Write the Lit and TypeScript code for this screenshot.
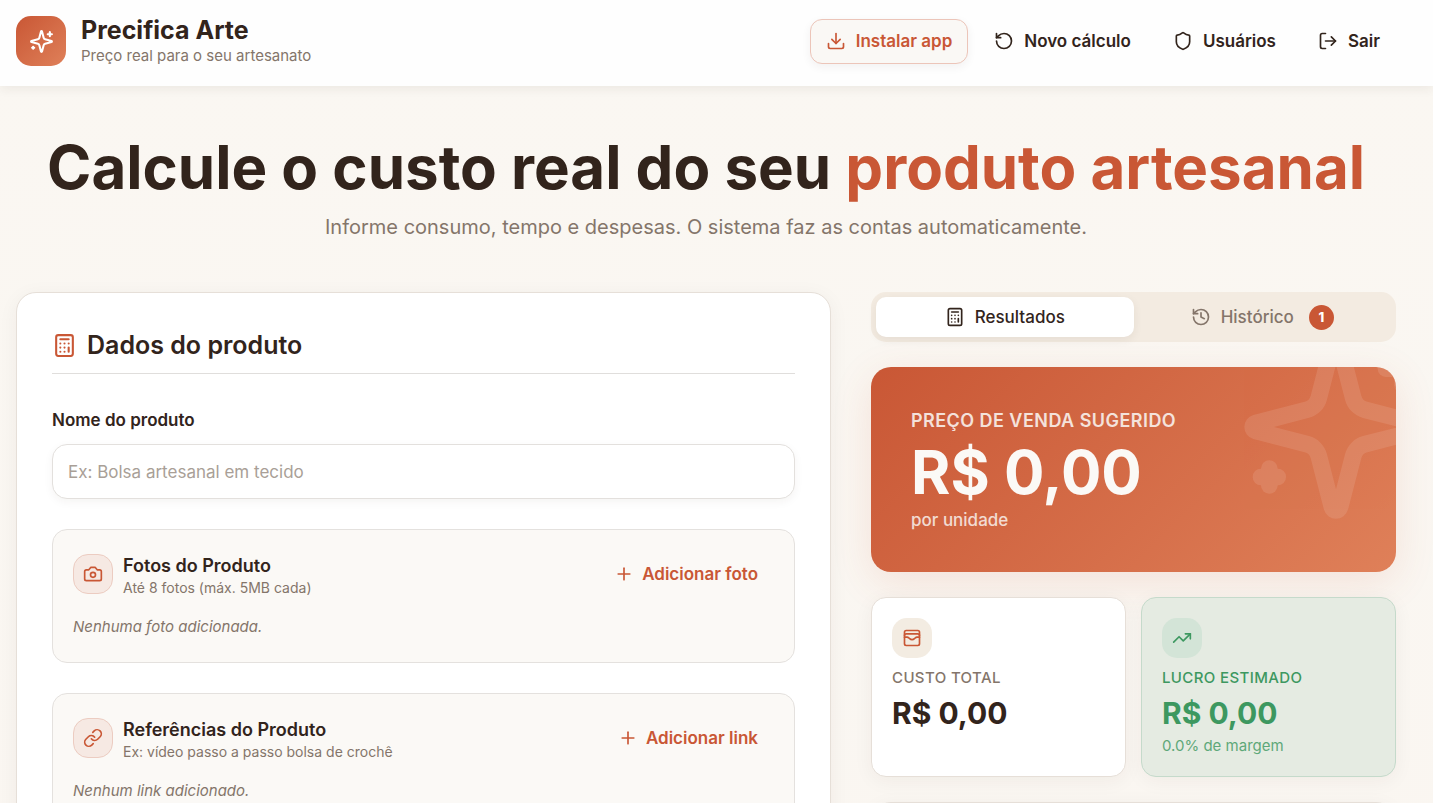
import { LitElement, html, css, svg } from "lit";
import { customElement, property, state } from "lit/decorators.js";
import { classMap } from "lit/directives/class-map.js";

const icons: Record<string, unknown> = {
  sparkles: svg`<path d="M9.937 15.5A2 2 0 0 0 8.5 14.063l-6.135-1.582a.5.5 0 0 1 0-.962L8.5 9.936A2 2 0 0 0 9.937 8.5l1.582-6.135a.5.5 0 0 1 .963 0L14.063 8.5A2 2 0 0 0 15.5 9.937l6.135 1.581a.5.5 0 0 1 0 .964L15.5 14.063a2 2 0 0 0-1.437 1.437l-1.582 6.135a.5.5 0 0 1-.963 0z"/><path d="M20 3v4"/><path d="M22 5h-4"/><path d="M4 17v2"/><path d="M5 18H3"/>`,
  download: svg`<path d="M21 15v4a2 2 0 0 1-2 2H5a2 2 0 0 1-2-2v-4"/><path d="m7 10 5 5 5-5"/><path d="M12 15V3"/>`,
  reset: svg`<path d="M3 12a9 9 0 1 0 9-9 9.75 9.75 0 0 0-6.74 2.74L3 8"/><path d="M3 3v5h5"/>`,
  shield: svg`<path d="M20 13c0 5-3.5 7.5-7.66 8.95a1 1 0 0 1-.67-.01C7.5 20.5 4 18 4 13V6a1 1 0 0 1 1-1c2 0 4.5-1.2 6.24-2.72a1.17 1.17 0 0 1 1.52 0C14.51 3.81 17 5 19 5a1 1 0 0 1 1 1z"/>`,
  logout: svg`<path d="M9 21H5a2 2 0 0 1-2-2V5a2 2 0 0 1 2-2h4"/><path d="m16 17 5-5-5-5"/><path d="M21 12H9"/>`,
  calculator: svg`<rect width="16" height="20" x="4" y="2" rx="2"/><path d="M8 6h8"/><path d="M16 14v4"/><path d="M16 10h.01"/><path d="M12 10h.01"/><path d="M8 10h.01"/><path d="M12 14h.01"/><path d="M8 14h.01"/><path d="M12 18h.01"/><path d="M8 18h.01"/>`,
  history: svg`<path d="M3 12a9 9 0 1 0 9-9 9.75 9.75 0 0 0-6.74 2.74L3 8"/><path d="M3 3v5h5"/><path d="M12 7v5l4 2"/>`,
  camera: svg`<path d="M14.5 4h-5L7 7H4a2 2 0 0 0-2 2v9a2 2 0 0 0 2 2h16a2 2 0 0 0 2-2V9a2 2 0 0 0-2-2h-3l-2.5-3z"/><circle cx="12" cy="13" r="3"/>`,
  link: svg`<path d="M10 13a5 5 0 0 0 7.54.54l3-3a5 5 0 0 0-7.07-7.07l-1.72 1.71"/><path d="M14 11a5 5 0 0 0-7.54-.54l-3 3a5 5 0 0 0 7.07 7.07l1.71-1.71"/>`,
  plus: svg`<path d="M5 12h14"/><path d="M12 5v14"/>`,
  wallet: svg`<rect width="18" height="18" x="3" y="3" rx="2"/><path d="M3 9a2 2 0 0 1 2-2h14a2 2 0 0 1 2 2"/><path d="M3 11h3c.8 0 1.6.3 2.1.9l1.1.9c1.6 1.6 4.1 1.6 5.7 0l1.1-.9c.5-.5 1.3-.9 2.1-.9H21"/>`,
  trend: svg`<path d="m22 7-8.5 8.5-5-5L2 17"/><path d="M16 7h6v6"/>`,
};

@customElement("ui-icon")
class UiIcon extends LitElement {
  @property() name = "";

  static styles = css`
    :host {
      display: block;
      flex: none;
      width: 20px;
      height: 20px;
    }
    .glyph {
      display: block;
      width: 100%;
      height: 100%;
      fill: none;
      stroke: currentColor;
      stroke-width: 2;
      stroke-linecap: round;
      stroke-linejoin: round;
    }
  `;

  render() {
    return html`<svg class="glyph" viewBox="0 0 24 24" aria-hidden="true">${icons[this.name]}</svg>`;
  }
}

@customElement("app-root")
class AppRoot extends LitElement {
  @state() private tab = "resultados";

  static styles = css`
    :host {
      display: block;
      min-height: 100vh;
      background: linear-gradient(#faf7f2, #faf6f1);
      color: #32241c;
      font-family: Inter, "Liberation Sans", sans-serif;
      font-size: 17px;
      line-height: 25px;
    }
    * {
      box-sizing: border-box;
    }
    h1,
    h2,
    h3,
    p {
      margin: 0;
    }
    button,
    input {
      font: inherit;
      color: inherit;
    }
    button {
      cursor: pointer;
    }

    .topbar {
      position: sticky;
      top: 0;
      z-index: 5;
      display: flex;
      align-items: center;
      justify-content: space-between;
      padding: 15px 37px 19px 16px;
      background: #fefefe;
      box-shadow: 0 3px 10px rgba(50, 36, 28, 0.07);
    }
    .brand {
      display: flex;
      align-items: center;
      gap: 15px;
    }
    .logo {
      display: grid;
      place-items: center;
      width: 50px;
      height: 50px;
      border-radius: 15px;
      background: linear-gradient(135deg, #c95735, #df8059);
      color: #fff;
    }
    .logo ui-icon {
      width: 25px;
      height: 25px;
    }
    .brand-name {
      font-size: 25px;
      line-height: 30px;
      font-weight: 700;
    }
    .brand-note {
      font-size: 15px;
      line-height: 22px;
      color: #84756a;
    }
    .actions {
      display: flex;
      gap: 10px;
    }
    .action {
      display: flex;
      align-items: center;
      gap: 10px;
      height: 45px;
      padding: 0 15px;
      border: 1px solid transparent;
      border-radius: 12px;
      background: none;
      font-weight: 600;
      white-space: nowrap;
    }
    .action.accent {
      border-color: #ecc5b9;
      background: #faf8f5;
      color: #c95735;
      box-shadow: 0 3px 10px rgba(50, 36, 28, 0.06);
    }

    .page {
      padding: 49px 37px 40px 16px;
    }
    .intro {
      display: grid;
      gap: 14px;
      margin-bottom: 51px;
      text-align: center;
    }
    .headline {
      font-size: 60px;
      line-height: 64px;
      font-weight: 700;
    }
    .headline em {
      font-style: normal;
      color: #c95735;
    }
    .lead {
      font-size: 20px;
      line-height: 28px;
      color: #84756a;
    }
    .columns {
      display: grid;
      grid-template-columns: minmax(0, 1fr) 525px;
      align-items: start;
      gap: 40px;
    }

    .card {
      border: 1px solid #e6dfd8;
      background: #fff;
      box-shadow: 0 4px 20px rgba(50, 36, 28, 0.05);
    }
    .form {
      display: grid;
      gap: 30px;
      padding: 35px;
      border-radius: 20px;
    }
    .form-title {
      display: flex;
      align-items: center;
      gap: 10px;
      padding-bottom: 10px;
      margin-bottom: 4px;
      border-bottom: 1px solid #e0dedc;
      font-size: 25px;
      line-height: 35px;
      font-weight: 600;
    }
    .form-title ui-icon {
      width: 25px;
      height: 25px;
      color: #c95735;
    }
    .field {
      display: grid;
      gap: 11px;
    }
    .field label {
      font-weight: 600;
    }
    .field input {
      width: 100%;
      height: 55px;
      padding: 0 15px;
      border: 1px solid #e3e0dd;
      border-radius: 15px;
      background: #fff;
      box-shadow: 0 3px 10px rgba(50, 36, 28, 0.05);
    }
    .field input::placeholder {
      color: #a99f97;
      opacity: 1;
    }
    .attach {
      display: grid;
      gap: 16px;
      padding: 20px;
      border: 1px solid #e4e1de;
      border-radius: 15px;
      background: #fbf9f6;
    }
    .attach-head {
      display: flex;
      align-items: center;
      gap: 10px;
    }
    .tile {
      display: grid;
      place-items: center;
      width: 40px;
      height: 40px;
      border-radius: 15px;
      background: #f3ece2;
      color: #c95735;
    }
    .tile.outlined {
      border: 1px solid #ecccc1;
      background: #f6e9e3;
    }
    .tile.green {
      background: #d3e4d7;
      color: #3d9860;
    }
    .attach-text {
      flex: 1;
      padding-top: 3px;
    }
    .attach-title {
      font-size: 18px;
      line-height: 25px;
      font-weight: 600;
    }
    .attach-note {
      font-size: 14px;
      line-height: 20px;
      color: #84756a;
    }
    .add {
      display: flex;
      align-items: center;
      gap: 8px;
      height: 45px;
      padding: 0 16px;
      border: 0;
      border-radius: 12px;
      background: none;
      color: #c95735;
      font-weight: 600;
    }
    .empty {
      padding-bottom: 3px;
      font-size: 15px;
      line-height: 25px;
      font-style: italic;
      color: #84756a;
    }

    .side {
      display: grid;
      gap: 25px;
    }
    .tabs {
      display: grid;
      grid-template-columns: 1fr 1fr;
      padding: 5px;
      border-radius: 15px;
      background: #f3ebe1;
    }
    .tab {
      display: flex;
      align-items: center;
      justify-content: center;
      gap: 10px;
      height: 40px;
      padding: 0 15px;
      border: 0;
      border-radius: 10px;
      background: none;
      color: #84756a;
      font-weight: 500;
    }
    .tab.active {
      background: #fff;
      color: #32241c;
      box-shadow: 0 3px 10px rgba(50, 36, 28, 0.07);
    }
    .count {
      display: grid;
      place-items: center;
      width: 25px;
      height: 25px;
      margin-left: 5px;
      border-radius: 50%;
      background: #c95735;
      color: #fff;
      font-size: 13px;
      font-weight: 800;
    }
    .suggested {
      position: relative;
      overflow: hidden;
      padding: 40px;
      border-radius: 20px;
      background: linear-gradient(135deg, #c95735, #df8059);
      color: #fbf9f6;
    }
    .suggested-wrap {
      border-radius: 20px;
      box-shadow: 0 10px 40px rgba(201, 87, 53, 0.13);
    }
    .watermark {
      position: absolute;
      top: -40px;
      right: -40px;
      width: 200px;
      height: 200px;
      opacity: 0.1;
      color: #fff;
    }
    .suggested-label {
      font-size: 18px;
      line-height: 27px;
      font-weight: 600;
      letter-spacing: 0.025em;
      text-transform: uppercase;
      opacity: 0.85;
    }
    .suggested-price {
      padding: 8px 0 6px;
      font-size: 60px;
      line-height: 60px;
      font-weight: 700;
    }
    .suggested-note {
      line-height: 24px;
      font-weight: 500;
      opacity: 0.8;
    }
    .metrics {
      display: grid;
      grid-template-columns: 1fr 1fr;
      gap: 15px;
    }
    .metric {
      padding: 20px 20px 18px;
      border-radius: 15px;
    }
    .metric.green {
      border-color: #c5dacb;
      background: #e5ebe2;
      color: #3d9860;
    }
    .metric-label {
      margin-top: 10px;
      font-size: 15px;
      line-height: 20px;
      font-weight: 500;
      letter-spacing: 0.025em;
      text-transform: uppercase;
      color: #84756a;
    }
    .metric.green .metric-label {
      color: inherit;
    }
    .metric-price {
      margin-top: 5px;
      font-size: 30px;
      line-height: 40px;
      font-weight: 700;
    }
    .metric-note {
      font-size: 15px;
      line-height: 25px;
      opacity: 0.8;
    }
    .breakdown {
      min-height: 200px;
      border-radius: 20px;
    }
  `;

  private attachment(icon: string, title: string, note: string, action: string, empty: string) {
    return html`
      <section class="attach">
        <div class="attach-head">
          <span class="tile outlined"><ui-icon name=${icon}></ui-icon></span>
          <div class="attach-text">
            <h3 class="attach-title">${title}</h3>
            <p class="attach-note">${note}</p>
          </div>
          <button class="add" type="button"><ui-icon name="plus"></ui-icon>${action}</button>
        </div>
        <p class="empty">${empty}</p>
      </section>
    `;
  }

  private tabButton(id: string, icon: string, label: string, count = 0) {
    const active = this.tab === id;
    return html`
      <button
        class=${classMap({ tab: true, active })}
        type="button"
        role="tab"
        aria-selected=${active ? "true" : "false"}
        @click=${() => (this.tab = id)}
      >
        <ui-icon name=${icon}></ui-icon>${label}${count ? html`<span class="count">${count}</span>` : ""}
      </button>
    `;
  }

  render() {
    return html`
      <header class="topbar">
        <div class="brand">
          <span class="logo"><ui-icon name="sparkles"></ui-icon></span>
          <div>
            <p class="brand-name">Precifica Arte</p>
            <p class="brand-note">Preço real para o seu artesanato</p>
          </div>
        </div>
        <nav class="actions">
          <button class="action accent" type="button"><ui-icon name="download"></ui-icon>Instalar app</button>
          <button class="action" type="button"><ui-icon name="reset"></ui-icon>Novo cálculo</button>
          <button class="action" type="button"><ui-icon name="shield"></ui-icon>Usuários</button>
          <button class="action" type="button"><ui-icon name="logout"></ui-icon>Sair</button>
        </nav>
      </header>

      <main class="page">
        <div class="intro">
          <h1 class="headline">Calcule o custo real do seu <em>produto artesanal</em></h1>
          <p class="lead">Informe consumo, tempo e despesas. O sistema faz as contas automaticamente.</p>
        </div>

        <div class="columns">
          <form class="card form">
            <h2 class="form-title"><ui-icon name="calculator"></ui-icon>Dados do produto</h2>
            <div class="field">
              <label for="nome">Nome do produto</label>
              <input id="nome" type="text" placeholder="Ex: Bolsa artesanal em tecido" />
            </div>
            ${this.attachment("camera", "Fotos do Produto", "Até 8 fotos (máx. 5MB cada)", "Adicionar foto", "Nenhuma foto adicionada.")}
            ${this.attachment("link", "Referências do Produto", "Ex: vídeo passo a passo bolsa de crochê", "Adicionar link", "Nenhum link adicionado.")}
          </form>

          <aside class="side">
            <div class="tabs" role="tablist">
              ${this.tabButton("resultados", "calculator", "Resultados")}
              ${this.tabButton("historico", "history", "Histórico", 1)}
            </div>
            <div class="suggested-wrap">
              <section class="suggested">
                <ui-icon class="watermark" name="sparkles"></ui-icon>
                <p class="suggested-label">Preço de venda sugerido</p>
                <p class="suggested-price">R$ 0,00</p>
                <p class="suggested-note">por unidade</p>
              </section>
            </div>
            <div class="metrics">
              <section class="card metric">
                <span class="tile"><ui-icon name="wallet"></ui-icon></span>
                <p class="metric-label">Custo total</p>
                <p class="metric-price">R$ 0,00</p>
              </section>
              <section class="card metric green">
                <span class="tile green"><ui-icon name="trend"></ui-icon></span>
                <p class="metric-label">Lucro estimado</p>
                <p class="metric-price">R$ 0,00</p>
                <p class="metric-note">0.0% de margem</p>
              </section>
            </div>
            <section class="card breakdown"></section>
          </aside>
        </div>
      </main>
    `;
  }
}
